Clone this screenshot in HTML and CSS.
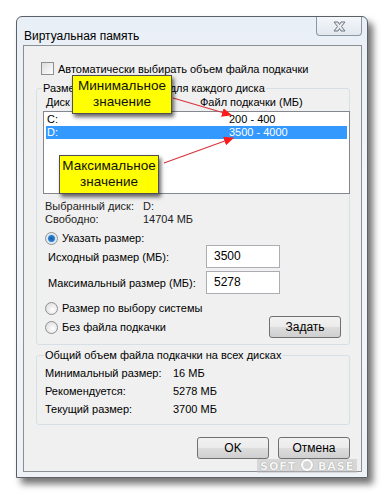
FILE: index.html
```html
<!DOCTYPE html>
<html lang="ru">
<head>
    <meta charset="UTF-8">
    <title>Виртуальная память</title>
    <link rel="stylesheet" href="styles.css">
</head>
<body>
    <div class="window">
        <div class="titlebar">
            <span class="title">Виртуальная память</span>
            <div class="close">
                <svg width="17" height="11" viewBox="0 0 17 11">
                    <path d="M3 1 L7 1 L8.5 3.5 L10 1 L14 1 L10.5 5.5 L14 10 L10 10 L8.5 7.5 L7 10 L3 10 L6.5 5.5 Z" fill="#e8ecf0" stroke="#6d7480" stroke-width="1"/>
                </svg>
            </div>
        </div>

        <div class="client">
            <label class="check-row">
                <span class="checkbox"></span>
                Автоматически выбирать объем файла подкачки
            </label>

            <fieldset class="group group-disk">
                <legend>Размер файла подкачки для каждого диска</legend>
                <div class="list-head">
                    <span class="col-disk">Диск [метка тома]</span>
                    <span>Файл подкачки (МБ)</span>
                </div>
                <div class="listbox">
                    <div class="list-row">
                        <span class="col-disk">C:</span>
                        <span>200 - 400</span>
                    </div>
                    <div class="list-row selected">
                        <span class="col-disk">D:</span>
                        <span>3500 - 4000</span>
                    </div>
                </div>

                <div class="info">
                    <div class="info-row"><span class="info-label">Выбранный диск:</span><span>D:</span></div>
                    <div class="info-row"><span class="info-label">Свободно:</span><span>14704 МБ</span></div>
                </div>

                <label class="radio-row first-radio">
                    <span class="radio checked"></span>
                    Указать размер:
                </label>
                <div class="field-row">
                    <span>Исходный размер (МБ):</span>
                    <span class="textbox">3500</span>
                </div>
                <div class="field-row">
                    <span>Максимальный размер (МБ):</span>
                    <span class="textbox">5278</span>
                </div>
                <label class="radio-row after-fields">
                    <span class="radio"></span>
                    Размер по выбору системы
                </label>
                <div class="last-row">
                    <label class="radio-row">
                        <span class="radio"></span>
                        Без файла подкачки
                    </label>
                    <button class="btn btn-set">Задать</button>
                </div>
            </fieldset>

            <fieldset class="group group-total">
                <legend>Общий объем файла подкачки на всех дисках</legend>
                <div class="total-row"><span class="total-label">Минимальный размер:</span><span>16 МБ</span></div>
                <div class="total-row"><span class="total-label">Рекомендуется:</span><span>5278 МБ</span></div>
                <div class="total-row"><span class="total-label">Текущий размер:</span><span>3700 МБ</span></div>
            </fieldset>

            <div class="buttons">
                <button class="btn">OK</button>
                <button class="btn">Отмена</button>
            </div>
        </div>

        <!-- callouts drawn over the dialog -->
        <svg class="arrows" width="352" height="462" viewBox="0 0 352 462">
            <defs>
                <marker id="head" markerWidth="10" markerHeight="9" refX="9" refY="4.5" orient="auto" markerUnits="userSpaceOnUse">
                    <path d="M0 0 L10 4.5 L0 9 Z" fill="#ff1a1a"/>
                </marker>
            </defs>
            <line x1="156" y1="81" x2="214" y2="98" stroke="#d9363e" stroke-width="1.3" marker-end="url(#head)"/>
            <line x1="147" y1="146" x2="216" y2="121" stroke="#d9363e" stroke-width="1.3" marker-end="url(#head)"/>
        </svg>
        <div class="callout callout-min">Минимальное<br>значение</div>
        <div class="callout callout-max">Максимальное<br>значение</div>

        <div class="watermark">SOFT <span class="wm-ring"></span> BASE</div>
    </div>
</body>
</html>
```

FILE: styles.css
```css
body {
    margin: 0;
    padding: 16px;
    background: #fff;
    font-family: "Liberation Sans", Arial, sans-serif;
    font-size: 11px;
    color: #000;
}
.window {
    position: relative;
    width: 350px;
    height: 460px;
    background: linear-gradient(#e9eff6, #f3f6f9 40%, #eef2f6);
    border: 1px solid #5c6168;
    border-radius: 6px 6px 0 0;
    box-shadow: 5px 6px 7px rgba(0, 0, 0, 0.55);
    display: flex;
    flex-direction: column;
    white-space: nowrap;
}
.titlebar {
    height: 28px;
    display: flex;
    align-items: flex-start;
    padding-left: 7px;
}
.title {
    margin-top: 12px;
    font-size: 12px;
}
.close {
    margin-left: auto;
    margin-right: 5px;
    width: 44px;
    height: 18px;
    border: 1px solid #8c97a4;
    border-top: none;
    border-radius: 0 0 4px 4px;
    background: linear-gradient(#f4f7fa, #e2e8ef);
    display: flex;
    align-items: center;
    justify-content: center;
}
.client {
    flex: 1;
    margin: 0 5px 5px 6px;
    border: 1px solid #8a8f95;
    background: #f0f0f0;
    padding: 0 11px 0 12px;
}
.check-row {
    display: flex;
    align-items: center;
    gap: 4px;
    margin: 16px 0 0 5px;
}
.checkbox {
    width: 11px;
    height: 11px;
    border: 1px solid #8f8f8f;
    background: linear-gradient(135deg, #dcdcdc, #fff);
}
.group {
    margin: 7px 0 0;
    padding: 0 0 0 6px;
    border: 1px solid #d5dfe5;
    border-radius: 3px;
}
.group legend {
    padding: 0 1px;
    margin-left: -1px;
}
.list-head {
    display: flex;
    height: 17px;
    line-height: 17px;
}
.col-disk {
    width: 154px;
    padding-left: 3px;
}
.listbox {
    height: 79px;
    margin-right: -1px;
    background: #fff;
    border: 1px solid #828790;
    padding: 1px 2px;
}
.list-row {
    display: flex;
    height: 13px;
    line-height: 13px;
}
.list-row .col-disk {
    width: 182px;
    padding-left: 1px;
}
.list-row.selected {
    background: #3399ff;
    color: #fff;
}
.info {
    margin-top: 6px;
    color: #222;
}
.info-row {
    display: flex;
    height: 13px;
    line-height: 13px;
    padding-left: 2px;
}
.info-label {
    width: 98px;
}
.radio-row {
    display: flex;
    align-items: center;
    gap: 4px;
    padding-left: 2px;
    height: 14px;
}
.radio {
    width: 11px;
    height: 11px;
    border-radius: 50%;
    border: 1px solid #8f8f8f;
    background: radial-gradient(circle at 60% 60%, #fff, #d6d6d6);
}
.radio.checked {
    background: radial-gradient(circle, #1c5a9a 0, #2d7fcf 3px, #cfe4f7 4px, #f4f4f4 6px);
}
.first-radio {
    margin-top: 5px;
}
.field-row {
    display: flex;
    align-items: center;
    justify-content: space-between;
    padding: 0 69px 0 5px;
    margin-top: 3px;
}
.first-radio + .field-row {
    margin-top: 0;
}
.textbox {
    line-height: 20px;
    padding-left: 7px;
    font-size: 12px;
    background: #fff;
    border: 1px solid #abadb3;
    box-sizing: border-box;
    width: 74px;
    height: 23px;
}
.after-fields {
    margin-top: 7px;
}
.last-row {
    display: flex;
    align-items: center;
    justify-content: space-between;
    padding-right: 8px;
    margin-top: 1px;
    margin-bottom: 6px;
}
.btn {
    font-family: inherit;
    font-size: 12px;
    color: #000;
    border: 1px solid #707070;
    border-radius: 3px;
    background: linear-gradient(#f2f2f2 0, #ebebeb 50%, #dddddd 51%, #cfcfcf 100%);
    height: 22px;
    width: 72px;
    padding: 0;
}
.group-total {
    margin-top: 4px;
    padding: 3px 0 6px 8px;
}
.total-row {
    display: flex;
    height: 18px;
    line-height: 18px;
}
.total-label {
    width: 128px;
}
.buttons {
    display: flex;
    justify-content: flex-end;
    gap: 9px;
    margin-top: 12px;
}
.arrows {
    position: absolute;
    left: 0;
    top: 0;
    pointer-events: none;
}
.callout {
    position: absolute;
    width: 98px;
    padding: 2px 0 3px;
    background: #ffff00;
    border: 1px solid #505050;
    box-shadow: 2px 3px 4px rgba(0, 0, 0, 0.6);
    font-size: 13.5px;
    line-height: 16px;
    text-align: center;
    color: #111;
}
.callout-min {
    left: 55px;
    top: 58px;
}
.callout-max {
    left: 42px;
    top: 138px;
}
.watermark {
    position: absolute;
    left: 240px;
    top: 442px;
    padding: 0 3px;
    background: rgba(190, 190, 190, 0.5);
    color: rgba(255, 255, 255, 0.95);
    font-family: "DejaVu Sans", sans-serif;
    font-weight: bold;
    font-size: 11px;
    line-height: 13px;
    letter-spacing: 1px;
    text-shadow: 0 0 1px #777;
}
.wm-ring {
    display: inline-block;
    width: 8px;
    height: 8px;
    border: 2px solid rgba(255, 255, 255, 0.95);
    border-radius: 50%;
    box-shadow: 0 0 1px #777;
    vertical-align: -1px;
}
```
